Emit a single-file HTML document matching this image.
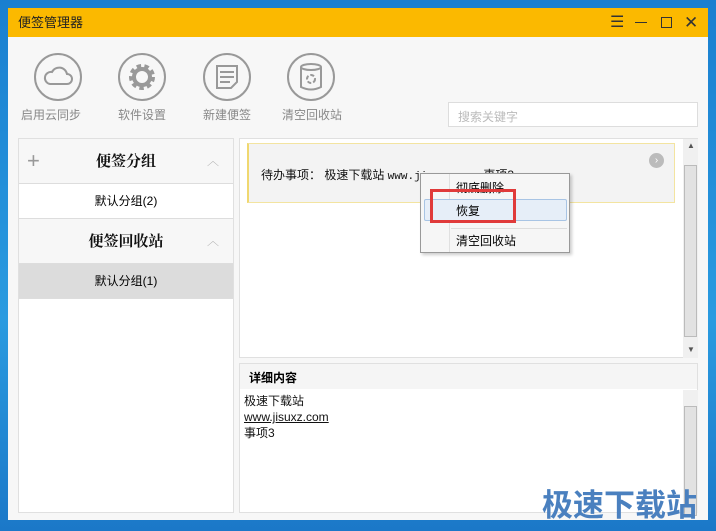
<!DOCTYPE html>
<html><head><meta charset="utf-8"><style>
*{margin:0;padding:0;box-sizing:border-box}
body{width:716px;height:531px;overflow:hidden;background:linear-gradient(180deg,#1a7fd0,#2a9be0 60%,#1b78c8);font-family:"Liberation Sans","Noto Sans CJK SC",sans-serif;font-size:12px;position:relative}
.a{position:absolute}
.win{left:8px;top:8px;width:700px;height:512px;background:#f7f7f7}
.title{left:0;top:0;width:700px;height:29px;background:#fbb900;color:#222;font-size:13px;line-height:29px;padding-left:10px}
.tb{width:52px;text-align:center;color:#888;font-size:12px}
.circ{width:48px;height:48px;border:2px solid #999;border-radius:50%;margin:0 auto 6px}
.panel{background:#fff;border:1px solid #e0e0e0}
.lh{left:0;width:214px;height:45px;background:#f7f7f7;border-bottom:1px solid #ddd;font-weight:bold;font-size:15px;text-align:center;line-height:44px;font-family:"Noto Serif CJK SC",serif;color:#111}
.li{left:0;width:214px;height:35px;text-align:center;line-height:34px;font-size:12px;border-bottom:1px solid #ddd}
.car{position:absolute;right:14px;top:0;color:#aaa;font-size:12px;font-weight:normal}
</style></head><body>
<div class="a win">
 <div class="a title">便签管理器
  <span class="a" style="left:602px;top:0;font-size:16px;color:#333">☰</span>
  <span class="a" style="left:627px;top:14px;width:12px;height:1px;background:#333"></span>
  <span class="a" style="left:653px;top:9px;width:11px;height:11px;border:1.5px solid #333"></span>
  <span class="a" style="left:676px;top:0;font-size:17px;color:#333">✕</span>
 </div>
 <div class="a tb" style="left:24px;top:45px"><div class="circ"><svg width="44" height="44" viewBox="0 0 44 44"><path d="M14 29h17a5 5 0 0 0 0-10 8 8 0 0 0-15-2 6 6 0 0 0-2 12z" fill="none" stroke="#999" stroke-width="2"/></svg></div></div>
 <div class="a tb" style="left:108px;top:45px"><div class="circ"><svg width="44" height="44" viewBox="0 0 44 44"><circle cx="22" cy="22" r="10" fill="none" stroke="#999" stroke-width="6" stroke-dasharray="4 3"/><circle cx="22" cy="22" r="8" fill="none" stroke="#999" stroke-width="4"/></svg></div></div>
 <div class="a tb" style="left:193px;top:45px"><div class="circ"><svg width="44" height="44" viewBox="0 0 44 44"><path d="M12 11h20v16l-6 6H12z M15 17h14M15 22h14M15 27h10" fill="none" stroke="#999" stroke-width="2"/></svg></div></div>
 <div class="a tb" style="left:277px;top:45px"><div class="circ"><svg width="44" height="44" viewBox="0 0 44 44"><ellipse cx="22" cy="12" rx="10" ry="3" fill="none" stroke="#999" stroke-width="2"/><path d="M12 12v20q10 5 20 0V12" fill="none" stroke="#999" stroke-width="2"/><circle cx="22" cy="24" r="4" fill="none" stroke="#999" stroke-width="2" stroke-dasharray="4 2"/></svg></div></div>
 <div class="a" style="left:13px;top:98px;color:#888;font-size:12px">启用云同步</div>
 <div class="a" style="left:110px;top:98px;color:#888">软件设置</div>
 <div class="a" style="left:195px;top:98px;color:#888">新建便签</div>
 <div class="a" style="left:274px;top:98px;color:#888">清空回收站</div>
 <div class="a" style="left:440px;top:94px;width:250px;height:25px;background:#fff;border:1px solid #ddd;color:#bbb;padding:5px 9px">搜索关键字</div>
 <div class="a panel" style="left:10px;top:130px;width:216px;height:375px">
  <div class="a lh" style="top:0"><span class="a" style="left:8px;top:0;color:#999;font-size:22px;font-weight:normal;font-family:'Liberation Sans'">+</span>便签分组<span class="car">︿</span></div>
  <div class="a li" style="top:45px">默认分组(2)</div>
  <div class="a lh" style="top:80px">便签回收站<span class="car">︿</span></div>
  <div class="a li" style="top:125px;background:#dcdcdc">默认分组(1)</div>
 </div>
 <div class="a panel" style="left:231px;top:130px;width:459px;height:220px">
  <div class="a" style="left:7px;top:4px;width:428px;height:60px;background:#f3f3f3;border:1px solid #f3e4a0;border-left:2px solid #f0d870;padding:22px 12px;font-size:12px;color:#111">待办事项：&nbsp;极速下载站 <span style="font-family:'Liberation Mono';font-size:11px">www.jisuxz.com</span> 事项3</div>
  <div class="a" style="left:409px;top:14px;width:15px;height:15px;border-radius:50%;background:#bbb;color:#fff;font-size:10px;text-align:center;line-height:15px">›</div>
  <div class="a" style="left:443px;top:0;width:15px;height:219px;background:#f0f0f0"><div class="a" style="left:1px;top:26px;width:13px;height:172px;background:#e2e2e2;border:1px solid #bbb"></div><span class="a" style="left:4px;top:2px;font-size:8px;color:#555">▲</span><span class="a" style="left:4px;top:206px;font-size:8px;color:#555">▼</span></div>
 </div>
 <div class="a" style="left:412px;top:165px;width:150px;height:80px;background:#f6f6f6;border:1px solid #999;box-shadow:2px 2px 3px rgba(0,0,0,.2)">
  <div class="a" style="left:28px;top:0;width:1px;height:78px;background:#e0e0e0"></div>
  <div class="a" style="left:35px;top:5px">彻底删除</div>
  <div class="a" style="left:3px;top:25px;width:143px;height:22px;background:#e6eef8;border:1px solid #a8c4e4;border-radius:2px"></div>
  <div class="a" style="left:35px;top:28px">恢复</div>
  <div class="a" style="left:30px;top:54px;width:116px;height:1px;background:#ddd"></div>
  <div class="a" style="left:35px;top:58px">清空回收站</div>
 </div>
 <div class="a" style="left:422px;top:181px;width:86px;height:34px;border:3px solid #e03a3a"></div>
 <div class="a panel" style="left:231px;top:355px;width:459px;height:150px">
  <div class="a" style="left:0;top:0;width:457px;height:25px;background:#f5f5f5;font-weight:bold;padding:5px 9px;font-size:12px">详细内容</div>
  <div class="a" style="left:4px;top:29px;line-height:16px;font-size:12px;color:#111">极速下载站<br><u>www.jisuxz.com</u><br>事项3</div>
  <div class="a" style="left:443px;top:26px;width:15px;height:123px;background:#f0f0f0"><div class="a" style="left:1px;top:16px;width:13px;height:110px;background:#e2e2e2;border:1px solid #bbb"></div></div>
 </div>
</div>
<div class="a" style="left:542px;top:480px;font-size:31px;font-weight:bold;color:#4a80bf">极速下载站</div>
</body></html>
